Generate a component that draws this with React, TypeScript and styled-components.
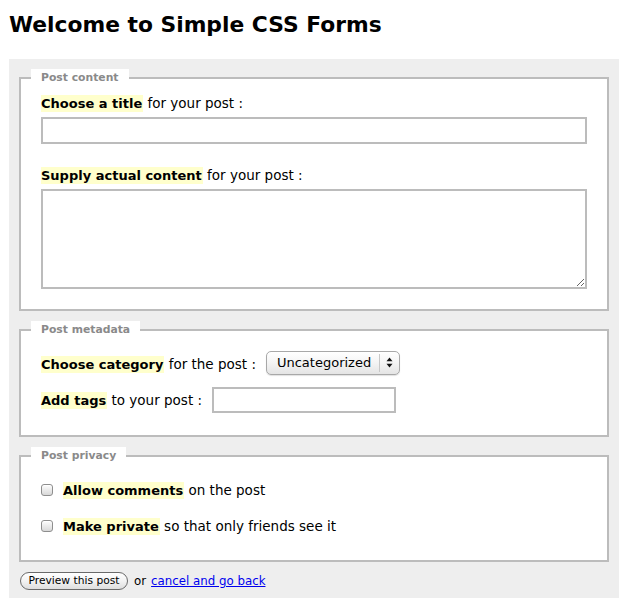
import React from "react";
import styled, { createGlobalStyle } from "styled-components";

const GlobalStyle = createGlobalStyle`
  html, body { margin: 0; padding: 0; background: #fff; }
  body { font-family: "DejaVu Sans", Verdana, sans-serif; color: #000; }
`;

const Page = styled.div`
  width: 630px;
  padding: 0 0 0 9px;
  box-sizing: border-box;
`;

const Title = styled.h1`
  margin: 0;
  padding: 11px 0 0 0;
  height: 59px;
  box-sizing: border-box;
  font-family: "DejaVu Sans", Verdana, sans-serif;
  font-size: 21.8px;
  line-height: 27px;
  font-weight: bold;
  color: #000;
`;

const Panel = styled.form`
  width: 610px;
  box-sizing: border-box;
  background: #eeeeee;
  padding: 10px 10px 8px;
  display: flex;
  flex-direction: column;
  gap: 10px;
`;

const Fieldset = styled.fieldset<{ $pt: number; $pb: number }>`
  margin: 0;
  min-width: 0;
  border: 2px solid #bcbcbc;
  background: #fff;
  padding: ${(p) => p.$pt}px 20px ${(p) => p.$pb}px;
  display: flex;
  flex-direction: column;
`;

const Legend = styled.legend`
  margin-left: -10px;
  padding: 0 10px;
  background: #fff;
  font-size: 10.8px;
  line-height: 18px;
  font-weight: bold;
  color: #8a8a8a;
`;

const Group = styled.div<{ $mt?: number }>`
  display: flex;
  flex-direction: column;
  gap: 5px;
  margin-top: ${(p) => p.$mt ?? 0}px;
`;

const Label = styled.label`
  display: block;
  font-size: 13.5px;
  line-height: 17px;
  height: 17px;
  white-space: nowrap;
`;

const Mark = styled.strong`
  display: inline-block;
  background: #ffffcc;
  font-size: 13px;
  font-weight: bold;
  line-height: 17px;
  padding-right: 1px;
`;

const TextInput = styled.input<{ $w?: number }>`
  box-sizing: border-box;
  width: ${(p) => (p.$w ? `${p.$w}px` : "100%")};
  height: ${(p) => (p.$w ? 26 : 27)}px;
  margin: 0;
  border: 2px solid #bcbcbc;
  background: #fff;
  font-family: "DejaVu Sans", Verdana, sans-serif;
  font-size: 13px;
  padding: 0 4px;
  outline: none;
`;

const TextArea = styled.textarea`
  box-sizing: border-box;
  width: 100%;
  height: 100px;
  margin: 0;
  border: 2px solid #bcbcbc;
  background: #fff;
  font-family: "DejaVu Sans", Verdana, sans-serif;
  font-size: 13px;
  outline: none;
  display: block;
`;

const Rows = styled.div`
  display: flex;
  flex-direction: column;
  gap: 10px;
`;

const Row = styled.div`
  display: flex;
  align-items: center;
  height: 26px;
`;

const InlineLabel = styled(Label)`
  margin-right: 10px;
`;

const SelectWrap = styled.span`
  position: relative;
  display: inline-flex;
  margin-top: -3px;
`;

const Select = styled.select`
  appearance: none;
  -webkit-appearance: none;
  box-sizing: border-box;
  width: 134px;
  height: 24px;
  margin: 0;
  padding: 0 0 0 10px;
  border: 1px solid #a8a8a8;
  border-radius: 5px;
  background: linear-gradient(#ffffff 0%, #f4f4f4 50%, #e4e4e4 100%);
  box-shadow: 0 1px 1px rgba(0, 0, 0, 0.12);
  font-family: "DejaVu Sans", Verdana, sans-serif;
  font-size: 13px;
  color: #000;
  outline: none;
`;

const Arrows = styled.span`
  position: absolute;
  top: 3px;
  bottom: 3px;
  right: 0;
  width: 20px;
  border-left: 1px solid #c8c8c8;
  display: flex;
  align-items: center;
  justify-content: center;
  pointer-events: none;
`;

const Check = styled.input`
  appearance: none;
  -webkit-appearance: none;
  box-sizing: border-box;
  width: 12px;
  height: 12px;
  margin: 0 10px 0 0;
  border: 1px solid #8e8e8e;
  border-radius: 3px;
  background: linear-gradient(#fdfdfd, #d8d8d8);
  box-shadow: inset 0 1px 0 #fff;
`;

const Footer = styled.div`
  display: flex;
  align-items: center;
  height: 18px;
  font-size: 11.8px;
`;

const Button = styled.button`
  box-sizing: border-box;
  width: 108px;
  height: 18px;
  margin: 0 6px 0 1px;
  padding: 0;
  border: 1px solid #6a6a6a;
  border-radius: 9px;
  background: linear-gradient(#ffffff 0%, #f3f3f3 50%, #dedede 100%);
  font-family: "DejaVu Sans", Verdana, sans-serif;
  font-size: 10.7px;
  color: #000;
  line-height: 16px;
`;

const Or = styled.span`
  margin-right: 5px;
`;

const Link = styled.a`
  color: #0000ee;
  text-decoration: underline;
`;

export default function App() {
  return (
    <>
      <GlobalStyle />
      <Page>
        <Title>Welcome to Simple CSS Forms</Title>
        <Panel onSubmit={(e) => e.preventDefault()}>
          <Fieldset $pt={8} $pb={20}>
            <Legend>Post content</Legend>
            <Group>
              <Label htmlFor="title">
                <Mark>Choose a title</Mark> for your post :
              </Label>
              <TextInput id="title" type="text" />
            </Group>
            <Group $mt={23}>
              <Label htmlFor="content">
                <Mark>Supply actual content</Mark> for your post :
              </Label>
              <TextArea id="content" />
            </Group>
          </Fieldset>

          <Fieldset $pt={12} $pb={22}>
            <Legend>Post metadata</Legend>
            <Rows>
              <Row>
                <InlineLabel htmlFor="cat">
                  <Mark>Choose category</Mark> for the post :
                </InlineLabel>
                <SelectWrap>
                  <Select id="cat" defaultValue="u">
                    <option value="u">Uncategorized</option>
                  </Select>
                  <Arrows>
                    <svg width="7" height="11" viewBox="0 0 7 11">
                      <path d="M3.5 0.5 L6.5 4.2 L0.5 4.2 Z" fill="#111" />
                      <path d="M3.5 10.5 L6.5 6.8 L0.5 6.8 Z" fill="#111" />
                    </svg>
                  </Arrows>
                </SelectWrap>
              </Row>
              <Row>
                <InlineLabel htmlFor="tags">
                  <Mark>Add tags</Mark> to your post :
                </InlineLabel>
                <TextInput id="tags" type="text" $w={184} />
              </Row>
            </Rows>
          </Fieldset>

          <Fieldset $pt={12} $pb={21}>
            <Legend>Post privacy</Legend>
            <Rows>
              <Row>
                <Check type="checkbox" id="comments" />
                <Label htmlFor="comments">
                  <Mark>Allow comments</Mark> on the post
                </Label>
              </Row>
              <Row>
                <Check type="checkbox" id="private" />
                <Label htmlFor="private">
                  <Mark>Make private</Mark> so that only friends see it
                </Label>
              </Row>
            </Rows>
          </Fieldset>

          <Footer>
            <Button type="button">Preview this post</Button>
            <Or>or</Or>
            <Link href="#">cancel and go back</Link>
          </Footer>
        </Panel>
      </Page>
    </>
  );
}
